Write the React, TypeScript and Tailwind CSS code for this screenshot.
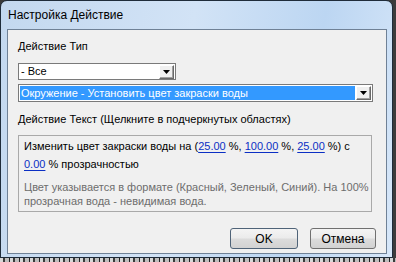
import React from "react";

const Arrow = () => (
  <div className="w-[15px] h-[14px] flex items-center justify-center bg-[#f0f0f0] border border-t-white border-l-white border-r-[#696969] border-b-[#696969] shadow-[inset_-1px_-1px_0_#a0a0a0]">
    <svg width="7" height="4" viewBox="0 0 7 4">
      <path d="M0 0H7L3.5 4Z" fill="#000" />
    </svg>
  </div>
);

const Link = ({ children }: { children: React.ReactNode }) => (
  <span className="text-[#0b2fc4] underline decoration-[#0b2fc4] underline-offset-[2px]">{children}</span>
);

export default function App() {
  return (
    <div
      className="w-[396px] h-[262px] bg-[#3a3a3a] overflow-hidden flex flex-col"
      style={{ fontFamily: '"Liberation Sans", Arial, sans-serif' }}
    >
      <div className="flex">
        <div className="w-[393px] h-[258px] rounded-t-[7px] border border-[#1f2c3a] bg-[linear-gradient(100deg,#c3d8ef_0%,#d2e3f6_45%,#bcd6f2_75%,#d7e7f9_100%)] flex flex-col pl-[6px] pr-[5px] pb-[3px]">
          <div className="h-[28px] flex items-center pl-[1px] text-[12px] text-black">
            Настройка Действие
          </div>
          <div className="flex-1 bg-[#f0f0f0] border border-[#6f8196] flex flex-col pl-[10px] pr-[13px] text-[11px] text-black">
            <div className="mt-[10px] h-[13px] leading-[13px]">Действие Тип</div>
            <div className="mt-[10px] w-[158px] h-[17px] bg-white border border-[#7a7a7a] flex items-center justify-between pl-[2px] pr-[1px]">
              <span className="leading-[13px]">- Все</span>
              <Arrow />
            </div>
            <div className="mt-[4px] h-[18px] bg-white border border-[#7a7a7a] flex items-center p-[1px] gap-[1px]">
              <div className="flex-1 h-full bg-[#3399ff] text-white flex items-center pl-[1px] leading-[13px]">
                Окружение - Установить цвет закраски воды
              </div>
              <Arrow />
            </div>
            <div className="mt-[11px] h-[13px] leading-[13px]">
              Действие Текст (Щелкните в подчеркнутых областях)
            </div>
            <div className="mt-[9px] mr-[1px] h-[77px] border border-[#a9a9a9] flex flex-col pl-[5px] pt-[3px]">
              <div className="leading-[14px] h-[14px]">
                Изменить цвет закраски воды на (<Link>25.00</Link> %, <Link>100.00</Link> %, <Link>25.00</Link> %) с
              </div>
              <div className="mt-[4px] leading-[14px] h-[14px]">
                <Link>0.00</Link> % прозрачностью
              </div>
              <div className="mt-[9px] leading-[14px] text-[#6d6d6d]">
                Цвет указывается в формате (Красный, Зеленый, Синий). На 100%
                <br />
                прозрачная вода - невидимая вода.
              </div>
            </div>
            <div className="mt-[16px] flex justify-end gap-[12px] mr-[-3px]">
              <button className="w-[68px] h-[21px] rounded-[3px] border border-[#4f6378] bg-[linear-gradient(#f4f4f4_0%,#ebebeb_48%,#dcdcdc_52%,#d2d2d2_100%)] text-[12px] text-black leading-none">
                OK
              </button>
              <button className="w-[66px] h-[21px] rounded-[3px] border border-[#707070] bg-[linear-gradient(#f4f4f4_0%,#ebebeb_48%,#dcdcdc_52%,#d2d2d2_100%)] text-[12px] text-black leading-none">
                Отмена
              </button>
            </div>
          </div>
        </div>
        <div className="flex-1 bg-[#3c3c3c]" />
      </div>
      <div className="flex-1 bg-[repeating-linear-gradient(90deg,#d8d8d8_0px,#d8d8d8_3px,#3a3a3a_3px,#3a3a3a_5px,#bdbdbd_5px,#bdbdbd_9px,#202020_9px,#202020_10px)]" />
    </div>
  );
}
